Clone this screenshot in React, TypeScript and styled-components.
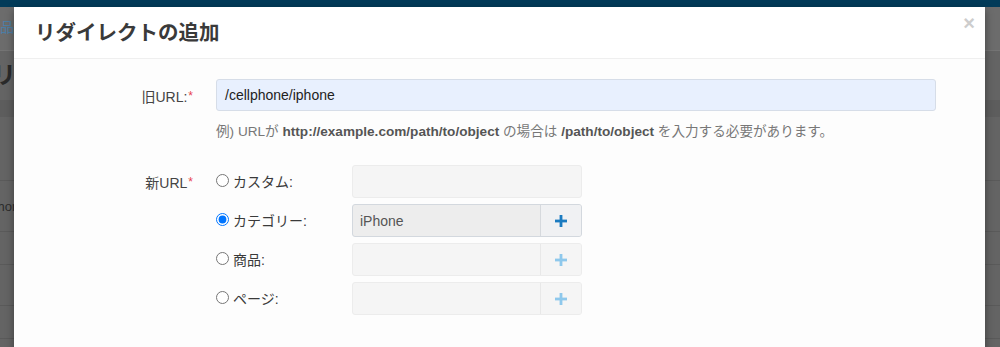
import React from "react";
import styled, { createGlobalStyle } from "styled-components";

const Global = createGlobalStyle`
  html, body { margin: 0; padding: 0; }
  body {
    width: 1000px; height: 347px; overflow: hidden;
    font-family: "Liberation Sans", "Noto Sans CJK JP", sans-serif;
    background: #646464;
  }
`;

const Page = styled.div`
  position: relative;
  width: 1000px;
  height: 347px;
  overflow: hidden;
  background: #646464;
`;

const TopBar = styled.div`
  height: 7px;
  background: #023b59;
`;

const Nav = styled.div`
  height: 43px;
  background: #6c6c6c;
  border-bottom: 1px solid #747474;
  display: flex;
  align-items: center;
  font-size: 14px;
  color: #4c7ea6;
`;

const NavText = styled.span`
  margin-left: -14px;
  margin-top: -6px;
`;

const PageTitle = styled.div`
  height: 49px;
  display: flex;
  align-items: center;
  font-size: 24px;
  font-weight: bold;
  color: #2a2a2a;
  span { margin-left: -8px; margin-top: -6px; }
`;

const Band = styled.div`
  height: 17px;
  background: #5d5d5d;
`;

const BgRow = styled.div<{ $h: number }>`
  height: ${(p) => p.$h}px;
  border-bottom: 1px solid #5a5a5a;
  display: flex;
  align-items: center;
  font-size: 13px;
  color: #2c2c2c;
  span { margin-left: -14px; }
`;

const Modal = styled.div`
  position: absolute;
  left: 14px;
  top: 7px;
  width: 971px;
  height: 360px;
  background: #fdfdfd;
  box-shadow: 0 3px 9px rgba(0, 0, 0, 0.4);
  border-radius: 2px 2px 0 0;
`;

const Header = styled.div`
  height: 52px;
  box-sizing: border-box;
  border-bottom: 1px solid #efefef;
  background: #fff;
  display: flex;
  align-items: flex-start;
  justify-content: space-between;
  padding: 11px 10px 0 21px;
`;

const Title = styled.h4`
  margin: 0;
  font-size: 20.5px;
  font-weight: bold;
  color: #3a3a3a;
  line-height: 30px;
`;

const Close = styled.span`
  font-size: 20px;
  font-weight: bold;
  color: #cdcdcd;
  line-height: 1;
  margin-top: -5px;
`;

const Body = styled.div`
  padding: 20px 49px 0 0;
  display: grid;
  grid-template-columns: 179px 1fr;
  column-gap: 23px;
  font-size: 14px;
  color: #333;
`;

const Label = styled.div<{ $top: number }>`
  text-align: right;
  padding-top: ${(p) => p.$top}px;
  color: #444;
  font-size: 14px;
`;

const Req = styled.span`
  color: #e8434f;
  margin-left: 1px;
  font-size: 12px;
  vertical-align: 2px;
`;

const Field = styled.div`
  display: flex;
  flex-direction: column;
`;

const TextInput = styled.div`
  height: 32px;
  box-sizing: border-box;
  border: 1px solid #d6dde8;
  border-radius: 3px;
  background: #e8f0fe;
  padding: 0 8px;
  display: flex;
  align-items: center;
  font-size: 14px;
  color: #222;
`;

const Help = styled.p`
  margin: 9px 0 25px 0;
  font-size: 13.6px;
  color: #777;
  b { color: #555; }
`;

const Options = styled.div`
  display: flex;
  flex-direction: column;
  gap: 6px;
`;

const OptionRow = styled.div`
  display: grid;
  grid-template-columns: 136px 230px;
  align-items: center;
`;

const RadioLabel = styled.label<{ $offset: number }>`
  display: flex;
  align-items: center;
  gap: 4px;
  font-size: 14px;
  color: #3a3a3a;
  margin-top: ${(p) => p.$offset}px;
  input {
    margin: 0;
    width: 13px;
    height: 13px;
  }
`;

const Group = styled.div<{ $active?: boolean }>`
  height: 33px;
  box-sizing: border-box;
  display: grid;
  grid-template-columns: 1fr 41px;
  border: 1px solid ${(p) => (p.$active ? "#d3d8de" : "#ececec")};
  border-radius: 3px;
  background: ${(p) => (p.$active ? "#ededed" : "#f5f5f5")};
  overflow: hidden;
`;

const Plain = styled.div`
  height: 33px;
  box-sizing: border-box;
  border: 1px solid #ececec;
  border-radius: 3px;
  background: #f5f5f5;
`;

const GroupValue = styled.div`
  display: flex;
  align-items: center;
  padding-left: 7px;
  font-size: 14px;
  color: #555;
`;

const AddBtn = styled.div<{ $active?: boolean }>`
  display: flex;
  align-items: center;
  justify-content: center;
  border-left: 1px solid ${(p) => (p.$active ? "#d6d9dd" : "#e8e8e8")};
  background: ${(p) => (p.$active ? "#f0f1f3" : "#f5f5f5")};
  color: ${(p) => (p.$active ? "#1b7bc0" : "#8ec8ec")};
`;

const Plus = () => (
  <svg width="12" height="12" viewBox="0 0 12 12">
    <rect x="4.6" y="0" width="2.8" height="12" fill="currentColor" />
    <rect x="0" y="4.6" width="12" height="2.8" fill="currentColor" />
  </svg>
);

export default function App() {
  return (
    <>
      <Global />
      <Page>
        <TopBar />
        <Nav>
          <NavText>商品</NavText>
        </Nav>
        <PageTitle>
          <span>リダ</span>
        </PageTitle>
        <Band />
        <BgRow $h={63} />
        <BgRow $h={50}>
          <span>iPhone</span>
        </BgRow>
        <BgRow $h={32} />
        <BgRow $h={40} />
        <BgRow $h={32} />
        <BgRow $h={40} />

        <Modal>
          <Header>
            <Title>リダイレクトの追加</Title>
            <Close>×</Close>
          </Header>
          <Body>
            <Label $top={7}>
              旧URL:<Req>*</Req>
            </Label>
            <Field>
              <TextInput>/cellphone/iphone</TextInput>
              <Help>
                例) URLが <b>http://example.com/path/to/object</b> の場合は{" "}
                <b>/path/to/object</b> を入力する必要があります。
              </Help>
            </Field>

            <Label $top={7}>
              新URL<Req>*</Req>
            </Label>
            <Options>
              <OptionRow>
                <RadioLabel $offset={-2}>
                  <input type="radio" name="t" readOnly />
                  カスタム:
                </RadioLabel>
                <Plain />
              </OptionRow>
              <OptionRow>
                <RadioLabel $offset={-2}>
                  <input type="radio" name="t" defaultChecked />
                  カテゴリー:
                </RadioLabel>
                <Group $active>
                  <GroupValue>iPhone</GroupValue>
                  <AddBtn $active>
                    <Plus />
                  </AddBtn>
                </Group>
              </OptionRow>
              <OptionRow>
                <RadioLabel $offset={-2}>
                  <input type="radio" name="t" readOnly />
                  商品:
                </RadioLabel>
                <Group>
                  <GroupValue />
                  <AddBtn>
                    <Plus />
                  </AddBtn>
                </Group>
              </OptionRow>
              <OptionRow>
                <RadioLabel $offset={-2}>
                  <input type="radio" name="t" readOnly />
                  ページ:
                </RadioLabel>
                <Group>
                  <GroupValue />
                  <AddBtn>
                    <Plus />
                  </AddBtn>
                </Group>
              </OptionRow>
            </Options>
          </Body>
        </Modal>
      </Page>
    </>
  );
}
